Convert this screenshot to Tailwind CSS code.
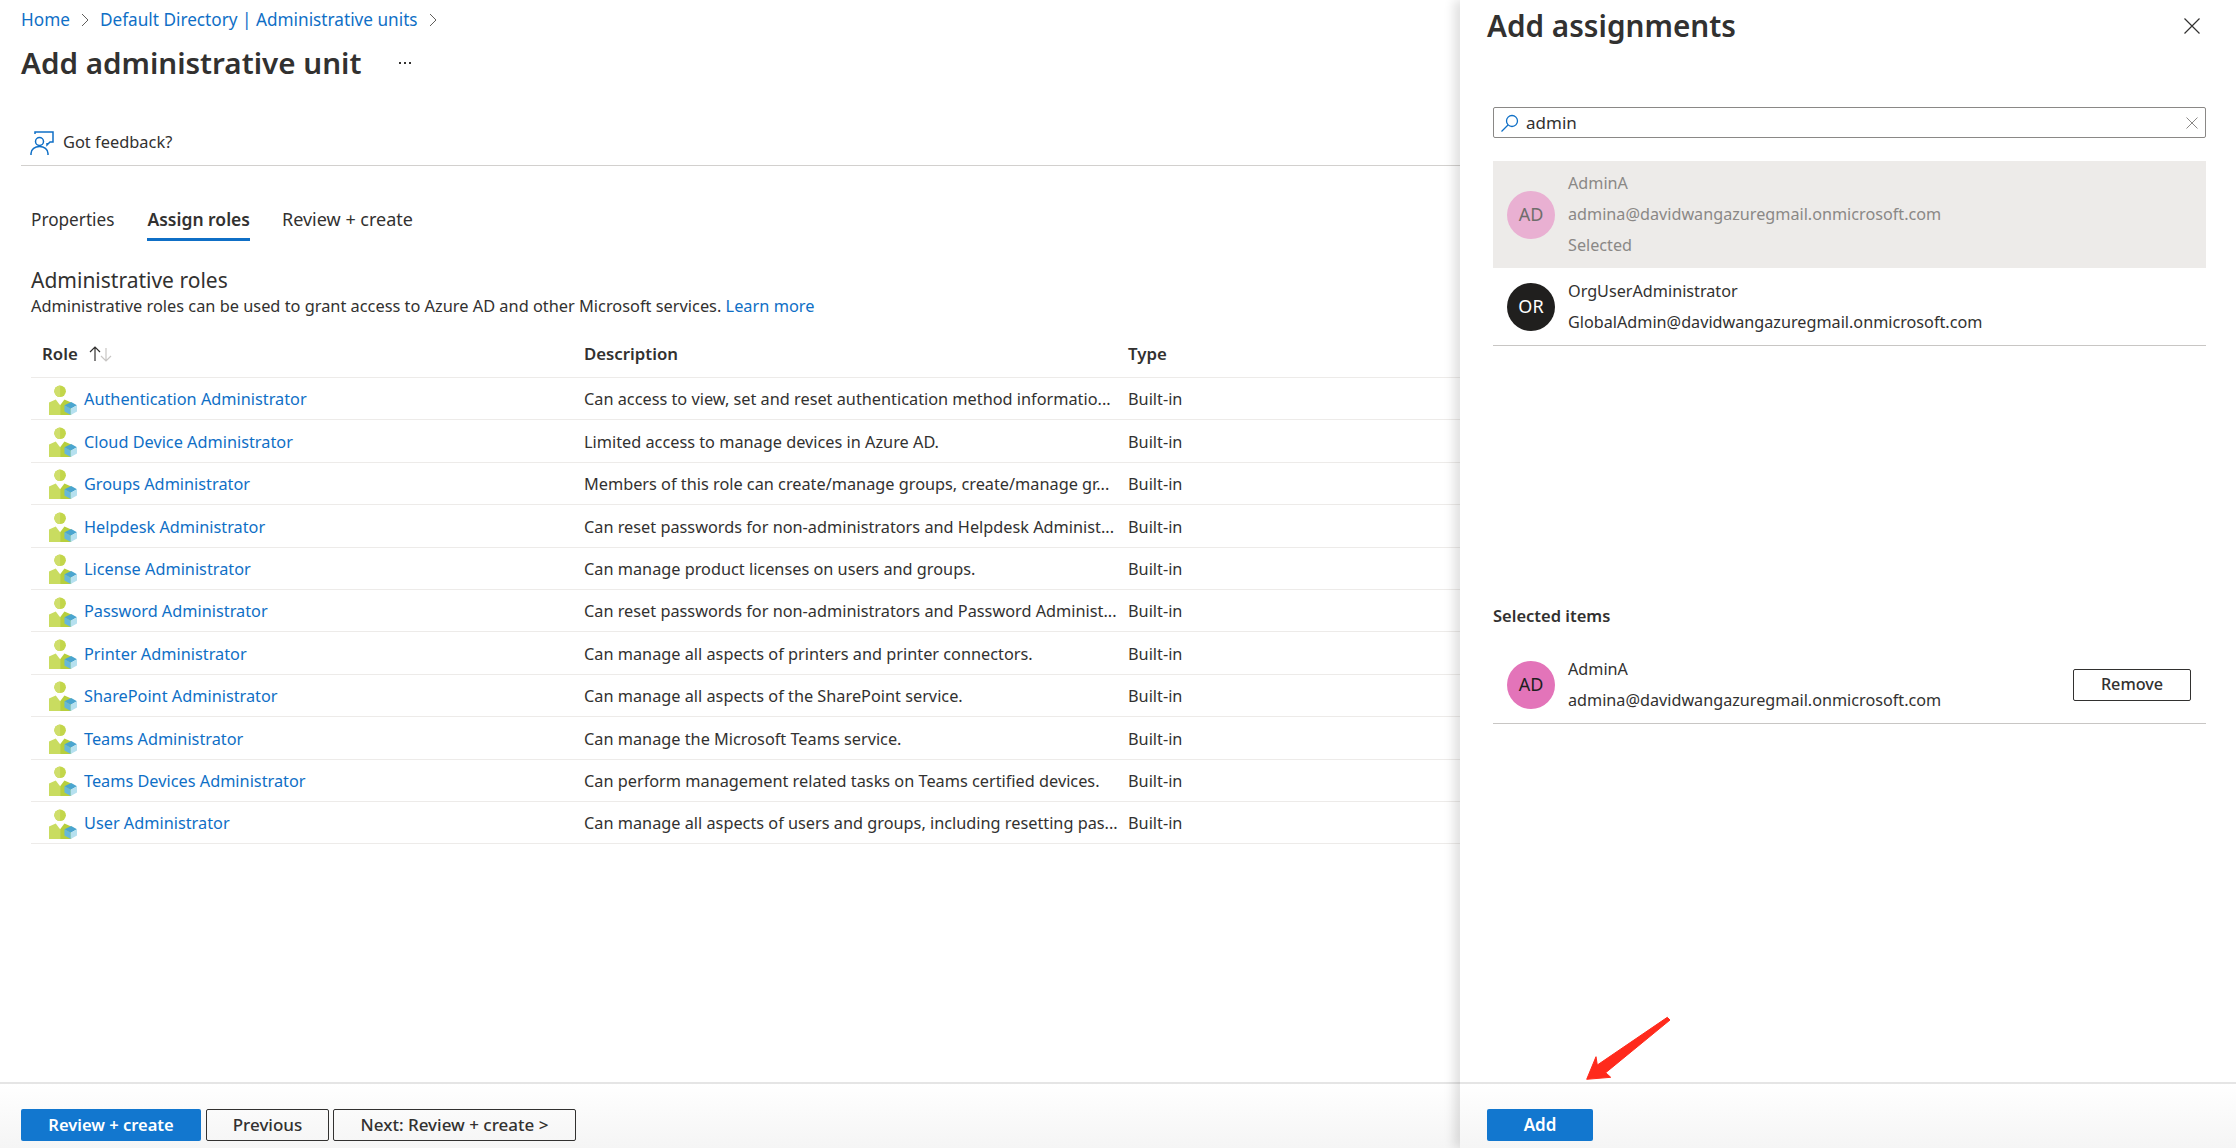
<!DOCTYPE html>
<html lang="en">
<head>
<meta charset="utf-8">
<title>Add administrative unit</title>
<script src="https://cdn.jsdelivr.net/npm/@tailwindcss/browser@4"></script>
</head>
<body class="bg-white">
<svg width="0" height="0" class="absolute">
  <defs>
    <symbol id="role" viewBox="1 0 29 31">
      <circle cx="12.500" cy="6.500" r="6" fill="#c3d64a"/>
      <path d="M12.500 .5a6 6 0 0 0 0 12z" fill="#cfde6b"/>
      <path d="M1 31V18l7-3 4.500 6V31z" fill="#c9dc60"/>
      <path d="M12.500 21l4.500-6 7 3v13H12.500z" fill="#b7cf3c"/>
      <path d="M17 21l7-3.500 6 3.500-6.500 3.500z" fill="#4aa5cf"/>
      <path d="M17 21l6.500 3.500V31L17 27.500z" fill="#66b7da"/>
      <path d="M30 21l-6.500 3.500V31l6.500-3.500z" fill="#b6e1ef"/>
    </symbol>
  </defs>
</svg>
<div class="relative flex h-[1148px] w-[2236px] overflow-hidden font-['Noto_Sans',sans-serif] text-[#323130]">
  <main class="flex w-[1460px] shrink-0 flex-col">
    <div class="flex h-[1082px] flex-col pl-[21px]">
      <nav class="flex h-[40px] items-center gap-[11px] text-[17.200px] text-[#0f6fc6]">
        <span>Home</span>
        <svg class="h-[14px] w-[8px] text-[#605e5c]" viewBox="0 0 8 14" fill="none" stroke="currentColor"><path d="M1 1l6 6-6 6"/></svg>
        <span>Default Directory | Administrative units</span>
        <svg class="h-[14px] w-[8px] text-[#605e5c]" viewBox="0 0 8 14" fill="none" stroke="currentColor"><path d="M1 1l6 6-6 6"/></svg>
      </nav>
      <div class="-mt-[1px] flex h-[48px] items-center">
        <h1 class="text-[29.600px] font-semibold">Add administrative unit</h1>
        <span class="ml-[38px] flex gap-[3px]"><i class="h-[2px] w-[2px] bg-[#323130]"></i><i class="h-[2px] w-[2px] bg-[#323130]"></i><i class="h-[2px] w-[2px] bg-[#323130]"></i></span>
      </div>
      <div class="mt-[34px] flex h-[45px] w-[1439px] items-start border-b border-[#d2d0ce] pl-[9px]">
        <div class="flex h-[44px] items-center gap-[9px] pb-[1px]">
          <svg class="h-[24px] w-[24px] text-[#0f6fc6]" viewBox="0 0 24 24" fill="none" stroke="currentColor" stroke-width="1.500"><path d="M5 3V1h18v10h-3l-3 3v-2"/><circle cx="9.500" cy="10.500" r="4"/><path d="M1 24v-1.500C1 18 5 15.500 9.500 15.500S18 18 18 22.500V24"/></svg>
          <span class="text-[16.400px]">Got feedback?</span>
        </div>
      </div>
      <div class="mt-[33px] flex h-[42px] items-start gap-[33px] pl-[10px] text-[17.700px]">
        <span class="h-[42px] text-[17.200px] leading-[41px]">Properties</span>
        <span class="h-[42px] border-b-[3px] border-[#0f6fc6] text-[17.500px] font-semibold leading-[41px]">Assign roles</span>
        <span class="-ml-[1px] h-[42px] text-[18px] leading-[41px]">Review + create</span>
      </div>
      <h2 class="mt-[24px] pl-[10px] text-[21px] leading-[30px]">Administrative roles</h2>
      <p class="-mt-[1px] pl-[10px] text-[16.350px] leading-[25px]">Administrative roles can be used to grant access to Azure AD and other Microsoft services. <a class="text-[#0f6fc6]">Learn more</a></p>
      <div class="mt-[12px] ml-[10px] w-[1429px] whitespace-nowrap">
        <div class="grid h-[47px] grid-cols-[553px_544px_1fr] items-center border-b border-[#edebe9] text-[16.800px] font-semibold">
          <div class="flex items-center pl-[11px]">Role
            <svg class="ml-[11px] h-[16px] w-[24px]" viewBox="0 0 24 16" fill="none" stroke-width="1.200"><path d="M6 15V1M1 6l5-5 5 5" stroke="#323130"/><path d="M17 2v13M12 10l5 5 5-5" stroke="#c8c6c4"/></svg>
          </div>
          <div>Description</div>
          <div>Type</div>
        </div>
        <div class="grid h-[42.400px] grid-cols-[553px_544px_1fr] items-center border-b border-[#edebe9] pt-[2px] text-[16.300px]"><a class="flex items-center gap-[7px] pl-[18px] text-[#0f6fc6]"><svg class="h-[30px] w-[28px]"><use href="#role"/></svg>Authentication Administrator</a><div>Can access to view, set and reset authentication method informatio...</div><div>Built-in</div></div>
        <div class="grid h-[42.400px] grid-cols-[553px_544px_1fr] items-center border-b border-[#edebe9] pt-[2px] text-[16.300px]"><a class="flex items-center gap-[7px] pl-[18px] text-[#0f6fc6]"><svg class="h-[30px] w-[28px]"><use href="#role"/></svg>Cloud Device Administrator</a><div>Limited access to manage devices in Azure AD.</div><div>Built-in</div></div>
        <div class="grid h-[42.400px] grid-cols-[553px_544px_1fr] items-center border-b border-[#edebe9] pt-[2px] text-[16.300px]"><a class="flex items-center gap-[7px] pl-[18px] text-[#0f6fc6]"><svg class="h-[30px] w-[28px]"><use href="#role"/></svg>Groups Administrator</a><div>Members of this role can create/manage groups, create/manage gr...</div><div>Built-in</div></div>
        <div class="grid h-[42.400px] grid-cols-[553px_544px_1fr] items-center border-b border-[#edebe9] pt-[2px] text-[16.300px]"><a class="flex items-center gap-[7px] pl-[18px] text-[#0f6fc6]"><svg class="h-[30px] w-[28px]"><use href="#role"/></svg>Helpdesk Administrator</a><div>Can reset passwords for non-administrators and Helpdesk Administ...</div><div>Built-in</div></div>
        <div class="grid h-[42.400px] grid-cols-[553px_544px_1fr] items-center border-b border-[#edebe9] pt-[2px] text-[16.300px]"><a class="flex items-center gap-[7px] pl-[18px] text-[#0f6fc6]"><svg class="h-[30px] w-[28px]"><use href="#role"/></svg>License Administrator</a><div>Can manage product licenses on users and groups.</div><div>Built-in</div></div>
        <div class="grid h-[42.400px] grid-cols-[553px_544px_1fr] items-center border-b border-[#edebe9] pt-[2px] text-[16.300px]"><a class="flex items-center gap-[7px] pl-[18px] text-[#0f6fc6]"><svg class="h-[30px] w-[28px]"><use href="#role"/></svg>Password Administrator</a><div>Can reset passwords for non-administrators and Password Administ...</div><div>Built-in</div></div>
        <div class="grid h-[42.400px] grid-cols-[553px_544px_1fr] items-center border-b border-[#edebe9] pt-[2px] text-[16.300px]"><a class="flex items-center gap-[7px] pl-[18px] text-[#0f6fc6]"><svg class="h-[30px] w-[28px]"><use href="#role"/></svg>Printer Administrator</a><div>Can manage all aspects of printers and printer connectors.</div><div>Built-in</div></div>
        <div class="grid h-[42.400px] grid-cols-[553px_544px_1fr] items-center border-b border-[#edebe9] pt-[2px] text-[16.300px]"><a class="flex items-center gap-[7px] pl-[18px] text-[#0f6fc6]"><svg class="h-[30px] w-[28px]"><use href="#role"/></svg>SharePoint Administrator</a><div>Can manage all aspects of the SharePoint service.</div><div>Built-in</div></div>
        <div class="grid h-[42.400px] grid-cols-[553px_544px_1fr] items-center border-b border-[#edebe9] pt-[2px] text-[16.300px]"><a class="flex items-center gap-[7px] pl-[18px] text-[#0f6fc6]"><svg class="h-[30px] w-[28px]"><use href="#role"/></svg>Teams Administrator</a><div>Can manage the Microsoft Teams service.</div><div>Built-in</div></div>
        <div class="grid h-[42.400px] grid-cols-[553px_544px_1fr] items-center border-b border-[#edebe9] pt-[2px] text-[16.300px]"><a class="flex items-center gap-[7px] pl-[18px] text-[#0f6fc6]"><svg class="h-[30px] w-[28px]"><use href="#role"/></svg>Teams Devices Administrator</a><div>Can perform management related tasks on Teams certified devices.</div><div>Built-in</div></div>
        <div class="grid h-[42.400px] grid-cols-[553px_544px_1fr] items-center border-b border-[#edebe9] pt-[2px] text-[16.300px]"><a class="flex items-center gap-[7px] pl-[18px] text-[#0f6fc6]"><svg class="h-[30px] w-[28px]"><use href="#role"/></svg>User Administrator</a><div>Can manage all aspects of users and groups, including resetting pas...</div><div>Built-in</div></div>
      </div>
    </div>
    <footer class="flex h-[66px] items-start gap-[4px] border-t-2 border-[#e5e5e5] bg-gradient-to-b from-white to-[#f5f5f5] pl-[21px] pt-[25px] text-[17px]">
      <button class="mr-[1px] h-[32px] w-[180px] rounded-[2px] bg-[#1277cf] text-[16.500px] font-semibold text-white">Review + create</button>
      <button class="h-[32px] w-[123px] rounded-[2px] border border-[#323130] font-medium">Previous</button>
      <button class="h-[32px] w-[243px] rounded-[2px] border border-[#323130] font-medium">Next: Review + create &gt;</button>
    </footer>
  </main>
  <aside class="relative flex w-[776px] shrink-0 flex-col bg-white shadow-[-6px_0_10px_rgba(0,0,0,0.12)]">
    <div class="flex h-[1082px] flex-col px-[33px]">
      <header class="-ml-[6px] flex h-[52px] items-center justify-between">
        <h2 class="text-[29.700px] font-semibold">Add assignments</h2>
        <svg class="mr-[3px] h-[16px] w-[16px]" viewBox="0 0 16 16" fill="none" stroke="#323130" stroke-width="1.200"><path d="M0.500 0.500l15 15M15.500 0.500l-15 15"/></svg>
      </header>
      <div class="mt-[55px] flex h-[31px] w-[713px] items-center rounded-[2px] border border-[#8a8886] pl-[7px] pr-[7px] text-[17px]">
        <svg class="h-[18px] w-[18px] shrink-0" viewBox="0 0 18 18" fill="none" stroke="#0f6fc6" stroke-width="1.300"><circle cx="11" cy="7" r="5.500"/><path d="M7 11l-6.500 6.500"/></svg>
        <span class="ml-[7px] flex-1">admin</span>
        <svg class="h-[12px] w-[12px]" viewBox="0 0 12 12" fill="none" stroke="#8a8886"><path d="M0.500 0.500l11 11M11.500 0.500l-11 11"/></svg>
      </div>
      <div class="mt-[23px] flex h-[107px] w-[713px] items-center gap-[13px] bg-[#edebe9] pl-[14px] text-[16.200px] text-[#8a8886]">
        <div class="flex h-[48px] w-[48px] items-center justify-center rounded-full bg-[#e9b0d2] text-[18px] text-[#6f6d6b]">AD</div>
        <div class="pb-[1px] leading-[31px]"><div>AdminA</div><div>admina@davidwangazuregmail.onmicrosoft.com</div><div>Selected</div></div>
      </div>
      <div class="flex h-[78px] w-[713px] items-center gap-[13px] border-b border-[#c8c6c4] pl-[14px] text-[16.200px]">
        <div class="flex h-[48px] w-[48px] items-center justify-center rounded-full bg-[#201f1e] text-[18px] text-white">OR</div>
        <div class="leading-[31px]"><div>OrgUserAdministrator</div><div>GlobalAdmin@davidwangazuregmail.onmicrosoft.com</div></div>
      </div>
      <h3 class="mt-[257px] h-[26px] text-[16.500px] font-semibold leading-[26px]">Selected items</h3>
      <div class="mt-[17px] flex h-[78px] w-[713px] items-center gap-[13px] border-b border-[#c8c6c4] pl-[14px] text-[16.200px]">
        <div class="flex h-[48px] w-[48px] items-center justify-center rounded-full bg-[#e374b9] text-[18px] text-[#201f1e]">AD</div>
        <div class="flex-1 leading-[31px]"><div>AdminA</div><div>admina@davidwangazuregmail.onmicrosoft.com</div></div>
        <button class="mr-[15px] h-[32px] w-[118px] rounded-[2px] border border-[#323130] font-medium">Remove</button>
      </div>
    </div>
    <footer class="h-[66px] border-t-2 border-[#e5e5e5] bg-gradient-to-b from-white to-[#f5f5f5] pl-[27px] pt-[25px]">
      <button class="h-[32px] w-[106px] rounded-[2px] bg-[#1277cf] text-[17px] font-semibold text-white">Add</button>
    </footer>
    <svg class="absolute left-[124px] top-[1015px] h-[68px] w-[88px]" viewBox="0 0 88 68"><path d="M83.300 2.300L13.300 50 12 41.700 2.700 64.300 26.700 62.300 21.700 57.700 86 5Z" fill="#ff2a1c" stroke="#ff2a1c" stroke-linejoin="round"/></svg>
  </aside>
</div>
</body>
</html>
